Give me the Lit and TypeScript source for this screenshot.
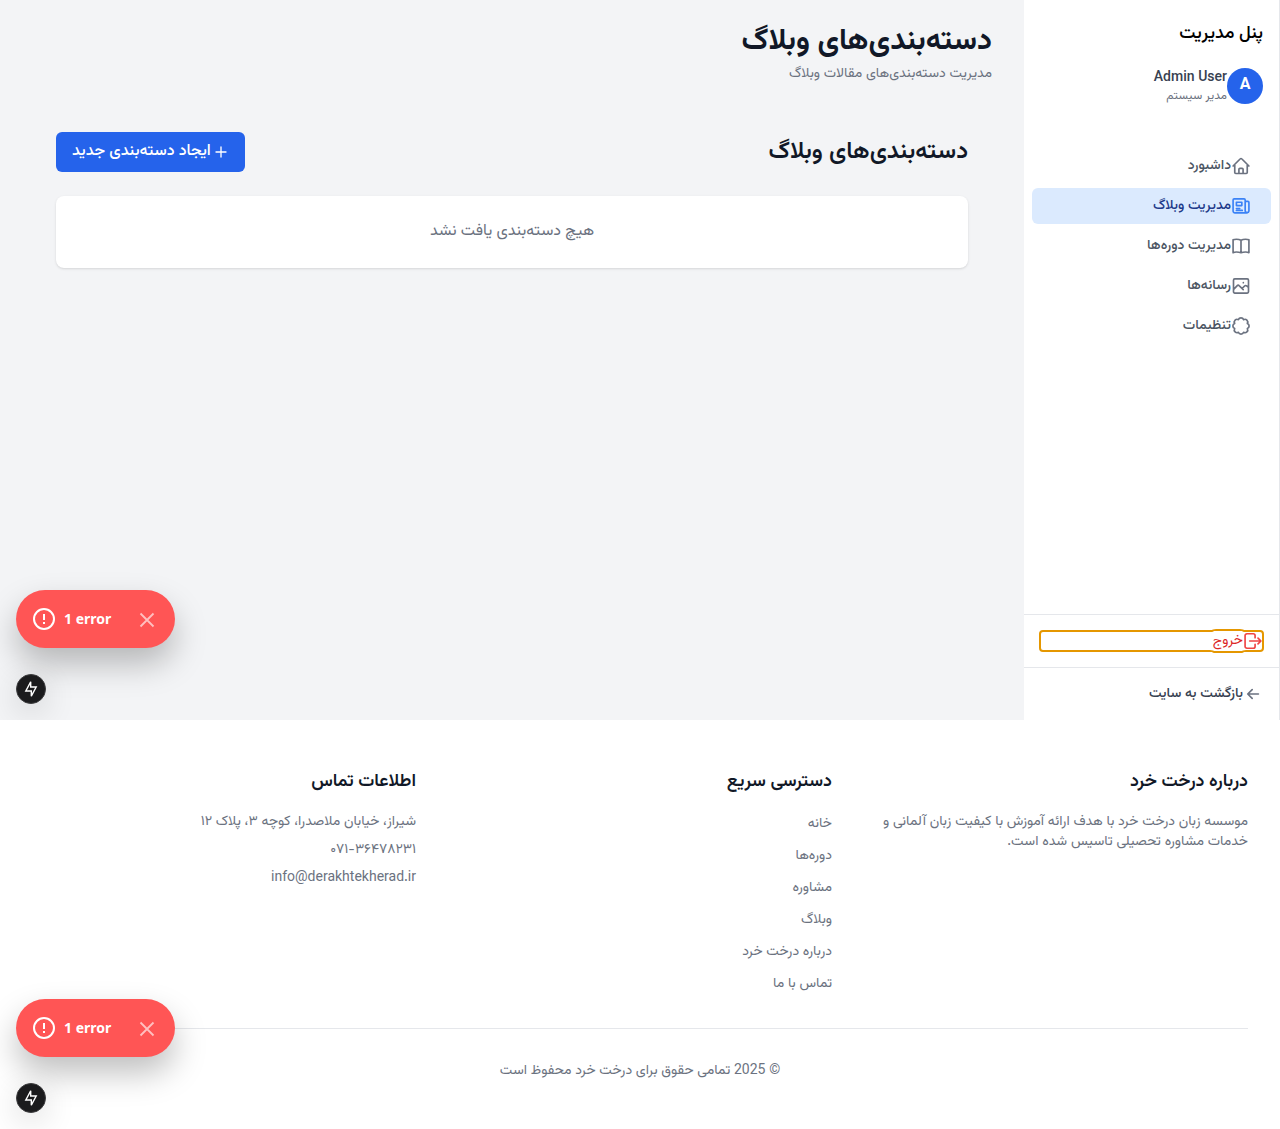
import { LitElement, html, css, svg } from "lit";
import { customElement } from "lit/decorators.js";

const paths: Record<string, string> = {
  home: "M4.5 10v9.8c0 .6.5 1.2 1.200 1.200h12.600c.7 0 1.200-.6 1.200-1.200V10M2.500 12l8.700-8.700a1.100 1.100 0 0 1 1.600 0L21.500 12M9.500 21v-5a1.200 1.200 0 0 1 1.200-1.200h2.600a1.200 1.200 0 0 1 1.200 1.200v5",
  news: "M17 6.500h3.200c.7 0 1.300.6 1.300 1.300V18a2.300 2.300 0 0 1-4.500 0V4.800c0-.7-.6-1.300-1.300-1.300H3.800c-.7 0-1.300.6-1.300 1.300V18a2.300 2.300 0 0 0 2.300 2.300h14.400M6.500 7.500h6.500v4H6.500zM6.500 15h4M6.500 17.300h7",
  book: "M12 5.200C10.500 4.300 8.700 3.900 6.500 3.900c-1.500 0-3 .2-4 .7v15.400c1-.5 2.500-.8 4-.8 2.200 0 4 .3 5.500.8 1.500-.5 3.300-.8 5.500-.8 1.500 0 3 .3 4 .8V4.600c-1-.5-2.500-.7-4-.7-2.200 0-4 .4-5.500 1.300v14.600",
  media: "M4.500 3.500h15c.8 0 1.500.7 1.500 1.500v14c0 .8-.7 1.500-1.500 1.500h-15c-.8 0-1.500-.7-1.500-1.500V5c0-.8.7-1.500 1.500-1.500ZM3.200 16l4.300-4.500a1.500 1.500 0 0 1 2.200 0l5 4.800M13.500 14.700l3-2.800a1.500 1.500 0 0 1 2.200 0l2.200 1.600M14.800 8h.01",
  badge: "M8.900 4.400a3.300 3.300 0 0 1 6.200 0A3.300 3.300 0 0 1 19.600 8.900a3.300 3.300 0 0 1 0 6.200A3.300 3.300 0 0 1 15.100 19.600a3.300 3.300 0 0 1-6.200 0A3.300 3.300 0 0 1 4.400 15.100a3.300 3.300 0 0 1 0-6.200A3.300 3.300 0 0 1 8.900 4.400Z",
  exit: "M14.500 8V5.500a2.200 2.200 0 0 0-2.200-2.200H4.700A2.200 2.200 0 0 0 2.500 5.500v13a2.200 2.200 0 0 0 2.200 2.200h7.600a2.200 2.200 0 0 0 2.200-2.200V16M8 12h13.200M18 8.500l3.500 3.500-3.500 3.500",
  back: "M18.500 12H6M11 6.700 5.700 12l5.300 5.300",
  plus: "M12 4.500v15M4.500 12h15",
};

const icon = (name: string) => html`<svg class="icon" viewBox="0 0 24 24" fill="none" stroke="currentColor" stroke-width="2" stroke-linecap="round" stroke-linejoin="round" aria-hidden="true">${svg`<path d=${paths[name]}></path>`}</svg>`;

const navItems = [
  { icon: "home", label: "داشبورد" },
  { icon: "news", label: "مدیریت وبلاگ", active: true },
  { icon: "book", label: "مدیریت دوره‌ها" },
  { icon: "media", label: "رسانه‌ها" },
  { icon: "badge", label: "تنظیمات" },
];

const quickLinks = ["خانه", "دوره‌ها", "مشاوره", "وبلاگ", "درباره درخت خرد", "تماس با ما"];

@customElement("dev-overlay")
export class DevOverlay extends LitElement {
  static styles = css`
    :host { display: block; direction: ltr; font-family: "Noto Sans", "Open Sans", sans-serif; }
    .pill {
      display: flex; align-items: center; gap: 8px; width: max-content;
      padding: 17px 16px; border-radius: 29px; background: #ff5555; color: #fff;
      box-shadow: 0 16px 32px rgb(0 0 0 / 25%);
      font-size: 14px; line-height: 24px; font-weight: 700;
    }
    .close { display: flex; margin: 0 0 0 16px; padding: 0; border: 0; background: none; color: #ffc0c0; }
    .tool {
      display: flex; align-items: center; justify-content: center; box-sizing: border-box;
      width: 30px; height: 30px; margin: 26px 0 0; padding: 0;
      border: 1px solid #3c3c3e; border-radius: 50%; background: #1b1b1d; color: #fff;
      box-shadow: 0 8px 32px rgb(0 0 0 / 16%);
    }
  `;
  render() {
    return html`
      <div class="pill" role="alert">
        <svg width="24" height="24" viewBox="0 0 24 24" fill="none" stroke="currentColor" stroke-width="2" aria-hidden="true"><circle cx="12" cy="12" r="10"></circle><path d="M12 7v6M12 15v2"></path></svg>
        <span>1 error</span>
        <button class="close" aria-label="Close">
          <svg width="24" height="24" viewBox="0 0 24 24" fill="none" stroke="currentColor" stroke-width="1.8" aria-hidden="true"><path d="m5.500 6.500 13 13M18.500 6.500l-13 13"></path></svg>
        </button>
      </div>
      <button class="tool" aria-label="Dev tools">
        <svg width="18" height="18" viewBox="0 0 18 18" fill="none" stroke="currentColor" stroke-width="1.4" aria-hidden="true"><path d="M8.700 1.800V7h5.500L9.300 16.200V11H3.800Z"></path></svg>
      </button>
    `;
  }
}

@customElement("app-root")
export class AppRoot extends LitElement {
  static styles = css`
    :host {
      display: block; position: relative; direction: rtl; background: #fff; color: #111827;
      font: 14px/20px Vazirmatn, Roboto, "DejaVu Sans", sans-serif;
    }
    h1, h2, h3, p, ul { margin: 0; padding: 0; }
    ul { list-style: none; }
    a { color: inherit; text-decoration: none; }
    button { font: inherit; }
    .icon { width: 20px; height: 20px; flex: none; }

    .shell { display: flex; position: relative; min-height: 720px; overflow: hidden; background: #f3f4f6; }
    .overlay { position: absolute; left: 16px; bottom: 16px; }

    .side { display: flex; flex-direction: column; flex: none; box-sizing: border-box; width: 256px; background: #fff; border-right: 1px solid #e5e7eb; }
    .brand { padding: 20px 16px; font-size: 18px; line-height: 28px; font-weight: 500; color: #000; }
    .user { display: flex; align-items: center; padding: 0 16px; }
    .avatar { display: flex; justify-content: center; width: 36px; height: 36px; border-radius: 50%; background: #2563eb; color: #fff; font-size: 16px; line-height: 36px; font-weight: 700; }
    .name { font-weight: 500; color: #374151; }
    .role { font-size: 12px; line-height: 16px; color: #6b7280; }
    .nav { display: flex; flex-direction: column; gap: 4px; flex: 1; padding: 44px 8px 0; }
    .item { display: flex; align-items: center; padding: 8px 20px; border-radius: 6px; font-weight: 500; color: #4b5563; }
    .item .icon { color: #6b7280; }
    .active { background: #dbeafe; color: #1e3a8a; }
    .active .icon { color: #3b82f6; }
    .block { display: flex; padding: 16px; border-top: 1px solid #e5e7eb; font-weight: 500; }
    .logout { display: flex; align-items: center; flex: 1; margin: 0; padding: 0; border: 0; background: none; color: #dc2626; font-weight: 400; text-align: right; outline: 2px auto #e59700; }
    .logout .icon { color: #ef4444; }
    .back { display: flex; align-items: center; color: #374151; }
    .back .icon { color: #6b7280; }

    .main { flex: 1; min-width: 0; }
    .header { padding: 24px 32px; }
    h1 { font-size: 30px; line-height: 36px; font-weight: 700; }
    .sub { margin-top: 4px; color: #6b7280; }
    .content { padding: 24px 56px; }
    .bar { display: flex; align-items: center; justify-content: space-between; margin-bottom: 24px; }
    h2 { font-size: 24px; line-height: 32px; font-weight: 600; }
    .create { display: flex; align-items: center; gap: 2px; padding: 8px 16px; border: 0; border-radius: 6px; background: #2563eb; color: #fff; font-size: 16px; line-height: 24px; font-weight: 500; }
    .create .icon { width: 16px; height: 16px; }
    .card { padding: 24px; border-radius: 8px; background: #fff; box-shadow: 0 1px 3px rgb(0 0 0 / 10%), 0 1px 2px -1px rgb(0 0 0 / 10%); font-size: 16px; line-height: 24px; text-align: center; color: #6b7280; }

    .footer { padding: 48px 32px; color: #6b7280; }
    .cols { display: grid; grid-template-columns: repeat(3, 1fr); gap: 32px; }
    h3 { margin-bottom: 16px; font-size: 18px; line-height: 28px; font-weight: 600; color: #111827; }
    .list { display: flex; flex-direction: column; gap: 8px; }
    .links { line-height: 24px; }
    .copy { margin-top: 32px; padding-top: 32px; border-top: 1px solid #e5e7eb; text-align: center; }
  `;
  render() {
    return html`
      <div class="shell">
        <aside class="side">
          <div class="brand">پنل مدیریت</div>
          <div class="user">
            <div class="avatar">A</div>
            <div><p class="name">Admin User</p><p class="role">مدیر سیستم</p></div>
          </div>
          <nav class="nav">
            ${navItems.map((i) => html`<a class="item ${i.active ? "active" : ""}" href="#">${icon(i.icon)}${i.label}</a>`)}
          </nav>
          <div class="block"><button class="logout">${icon("exit")}<div><span>خروج</span></div></button></div>
          <div class="block"><a class="back" href="#">${icon("back")}بازگشت به سایت</a></div>
        </aside>
        <main class="main">
          <header class="header">
            <h1>دسته‌بندی‌های وبلاگ</h1>
            <p class="sub">مدیریت دسته‌بندی‌های مقالات وبلاگ</p>
          </header>
          <section class="content">
            <div class="bar">
              <h2>دسته‌بندی‌های وبلاگ</h2>
              <button class="create">${icon("plus")}ایجاد دسته‌بندی جدید</button>
            </div>
            <div class="card">هیچ دسته‌بندی یافت نشد</div>
          </section>
        </main>
        <dev-overlay class="overlay"></dev-overlay>
      </div>
      <footer class="footer">
        <div class="cols">
          <section>
            <h3>درباره درخت خرد</h3>
            <p>موسسه زبان درخت خرد با هدف ارائه آموزش با کیفیت زبان آلمانی و خدمات مشاوره تحصیلی تاسیس شده است.</p>
          </section>
          <section>
            <h3>دسترسی سریع</h3>
            <ul class="list links">${quickLinks.map((l) => html`<li><a href="#">${l}</a></li>`)}</ul>
          </section>
          <section>
            <h3>اطلاعات تماس</h3>
            <ul class="list">
              <li>شیراز، خیابان ملاصدرا، کوچه ۳، پلاک ۱۲</li>
              <li>۰۷۱-۳۶۴۷۸۲۳۱</li>
              <li>info@derakhtekherad.ir</li>
            </ul>
          </section>
        </div>
        <p class="copy">© 2025 تمامی حقوق برای درخت خرد محفوظ است</p>
      </footer>
      <dev-overlay class="overlay"></dev-overlay>
    `;
  }
}
